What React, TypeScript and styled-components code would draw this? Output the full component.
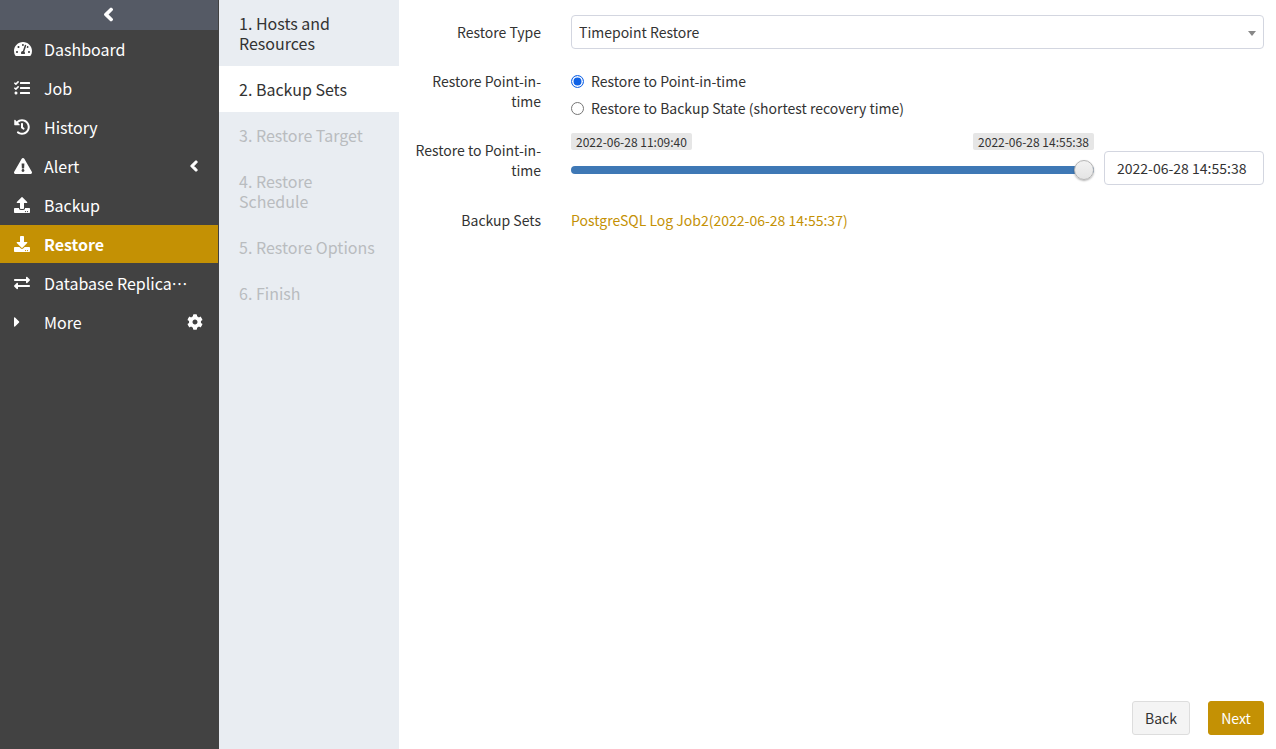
import React from "react";
import styled, { createGlobalStyle } from "styled-components";
import {
  FaCaretRight,
  FaChevronLeft,
  FaCog,
  FaDownload,
  FaExchangeAlt,
  FaExclamationTriangle,
  FaHistory,
  FaTachometerAlt,
  FaTasks,
  FaUpload,
} from "react-icons/fa";

const GlobalStyle = createGlobalStyle`
  html, body {
    margin: 0;
    padding: 0;
    height: 100%;
    overflow: hidden;
  }
  body {
    font-family: "Noto Sans CJK SC", "Noto Sans", sans-serif;
    font-size: 14px;
    color: #333;
    background: #fff;
  }
`;

const Page = styled.div`
  display: flex;
  width: 1276px;
  height: 749px;
`;

const Sidebar = styled.aside`
  width: 219px;
  flex-shrink: 0;
  background: #424242;
  color: #fff;
`;

const Collapse = styled.div`
  height: 30px;
  margin-right: 1px;
  display: flex;
  align-items: center;
  justify-content: center;
  background: #555a65;
  font-size: 15px;
  padding: 0 2px 1px 0;
  box-sizing: border-box;

  svg {
    stroke: currentColor;
    stroke-width: 40;
  }
`;

const NavItem = styled.div<{ $active?: boolean }>`
  height: 38px;
  margin: 0 1px 1px 0;
  box-sizing: border-box;
  display: flex;
  align-items: center;
  padding: 0 15px 1px 14px;
  font-size: 16px;
  font-weight: ${(p) => (p.$active ? 700 : 400)};
  background: ${(p) => (p.$active ? "#c49104" : "transparent")};
`;

const NavIcon = styled.span<{ $size?: number; $ml?: number }>`
  width: 30px;
  flex-shrink: 0;
  display: flex;
  align-items: center;
  font-size: ${(p) => p.$size ?? 16}px;
  margin-left: ${(p) => p.$ml ?? 0}px;
  margin-right: ${(p) => -(p.$ml ?? 0)}px;
`;

const NavLabel = styled.span`
  flex: 1;
  min-width: 0;
  max-width: 145px;
  white-space: nowrap;
  overflow: hidden;
  text-overflow: ellipsis;
`;

const NavTail = styled.span<{ $size: number; $mr: number; $bold?: boolean }>`
  display: flex;
  align-items: center;
  margin-left: auto;
  margin-right: ${(p) => p.$mr}px;
  font-size: ${(p) => p.$size}px;

  svg {
    stroke: currentColor;
    stroke-width: ${(p) => (p.$bold ? 50 : 0)};
  }
`;

const Steps = styled.nav`
  width: 180px;
  flex-shrink: 0;
  background: #e9edf2;
`;

const Step = styled.div<{ $state: "done" | "active" | "todo" }>`
  padding: 13px 20px;
  font-size: 16px;
  line-height: 20px;
  color: ${(p) => (p.$state === "todo" ? "#b9bcbf" : "#333")};
  background: ${(p) => (p.$state === "active" ? "#fff" : "transparent")};
`;

const Main = styled.main`
  flex: 1;
  display: flex;
  flex-direction: column;
  padding: 15px 12px 14px 0;
`;

const FormRow = styled.div<{ $mb: number }>`
  display: grid;
  grid-template-columns: 142px 1fr;
  column-gap: 30px;
  margin-bottom: ${(p) => p.$mb}px;
`;

const Label = styled.label<{ $pt: number }>`
  text-align: right;
  line-height: 20px;
  padding-left: 15px;
  padding-top: ${(p) => p.$pt}px;
`;

const Select = styled.div`
  position: relative;
  height: 34px;
  box-sizing: border-box;
  border: 1px solid #d3d6e0;
  border-radius: 4px;
  padding: 0 7px;
  line-height: 33px;

  &::after {
    content: "";
    position: absolute;
    right: 7px;
    top: 15px;
    border-left: 4px solid transparent;
    border-right: 4px solid transparent;
    border-top: 5px solid #888;
  }
`;

const RadioGroup = styled.div`
  display: flex;
  flex-direction: column;
  gap: 7px;
  padding-top: 3px;
`;

const RadioRow = styled.div`
  display: flex;
  align-items: center;
  gap: 7px;
  height: 20px;
`;

const RadioMark = styled.span<{ $on?: boolean }>`
  width: 13px;
  height: 13px;
  box-sizing: border-box;
  border-radius: 50%;
  border: ${(p) => (p.$on ? "1px solid #0f62e6" : "1px solid #767676")};
  background: #fff;
  box-shadow: ${(p) => (p.$on ? "inset 0 0 0 1.5px #fff, inset 0 0 0 6px #0f62e6" : "none")};
`;

const SliderRow = styled.div`
  display: flex;
  align-items: flex-start;
  gap: 10px;
`;

const Slider = styled.div`
  position: relative;
  flex: 1;
  height: 62px;
`;

const Track = styled.div`
  position: absolute;
  left: 0;
  right: 0;
  top: 33px;
  height: 8px;
  border-radius: 4px;
  background: #3e78b5;
`;

const Thumb = styled.div`
  position: absolute;
  right: 0;
  top: 27px;
  width: 20px;
  height: 20px;
  box-sizing: border-box;
  border-radius: 50%;
  border: 1px solid #b5b5b5;
  background: linear-gradient(#f2f2f2, #e4e4e4);
  box-shadow: 0 1px 2px rgba(0, 0, 0, 0.3);
`;

const SliderTip = styled.span<{ $side: "left" | "right" }>`
  position: absolute;
  top: 0;
  ${(p) => p.$side}: 0;
  height: 17px;
  padding: 0 5px;
  border-radius: 2px;
  background: #e6e6e6;
  font-size: 12px;
  line-height: 17px;
  white-space: nowrap;
`;

const TimeInput = styled.div`
  width: 160px;
  height: 34px;
  margin-top: 18px;
  box-sizing: border-box;
  border: 1px solid #d3d6e0;
  border-radius: 4px;
  padding-left: 12px;
  line-height: 33px;
`;

const SetLink = styled.a`
  line-height: 20px;
  padding-top: 3px;
  color: #c49104;
`;

const Footer = styled.div`
  margin-top: auto;
  display: flex;
  justify-content: flex-end;
  gap: 18px;
`;

const Button = styled.button<{ $primary?: boolean }>`
  height: 34px;
  width: ${(p) => (p.$primary ? 56 : 58)}px;
  padding: 0;
  border-radius: 3px;
  border: 1px solid ${(p) => (p.$primary ? "#c49104" : "#ddd")};
  background: ${(p) => (p.$primary ? "#c49104" : "#f4f4f4")};
  color: ${(p) => (p.$primary ? "#fff" : "#333")};
  font: inherit;
`;

const navItems = [
  { label: "Dashboard", icon: <FaTachometerAlt />, iconSize: 18 },
  { label: "Job", icon: <FaTasks /> },
  { label: "History", icon: <FaHistory /> },
  {
    label: "Alert",
    icon: <FaExclamationTriangle />,
    iconSize: 18,
    tail: <FaChevronLeft />,
    tailSize: 12,
    tailMr: 3,
    tailBold: true,
  },
  { label: "Backup", icon: <FaUpload /> },
  { label: "Restore", icon: <FaDownload />, active: true },
  { label: "Database Replication", icon: <FaExchangeAlt /> },
  { label: "More", icon: <FaCaretRight />, iconMl: -5, tail: <FaCog />, tailSize: 16, tailMr: 0 },
];

const steps: { label: string; state: "done" | "active" | "todo" }[] = [
  { label: "1. Hosts and Resources", state: "done" },
  { label: "2. Backup Sets", state: "active" },
  { label: "3. Restore Target", state: "todo" },
  { label: "4. Restore Schedule", state: "todo" },
  { label: "5. Restore Options", state: "todo" },
  { label: "6. Finish", state: "todo" },
];

const App = () => {
  return (
    <Page>
      <GlobalStyle />
      <Sidebar>
        <Collapse>
          <FaChevronLeft />
        </Collapse>
        {navItems.map((item) => (
          <NavItem key={item.label} $active={item.active}>
            <NavIcon $size={item.iconSize} $ml={item.iconMl}>
              {item.icon}
            </NavIcon>
            <NavLabel>{item.label}</NavLabel>
            {item.tail && (
              <NavTail $size={item.tailSize ?? 16} $mr={item.tailMr ?? 0} $bold={item.tailBold}>
                {item.tail}
              </NavTail>
            )}
          </NavItem>
        ))}
      </Sidebar>
      <Steps>
        {steps.map((step) => (
          <Step key={step.label} $state={step.state}>
            {step.label}
          </Step>
        ))}
      </Steps>
      <Main>
        <FormRow $mb={19}>
          <Label $pt={7}>Restore Type</Label>
          <Select>Timepoint Restore</Select>
        </FormRow>
        <FormRow $mb={15}>
          <Label $pt={3}>Restore Point-in-time</Label>
          <RadioGroup>
            <RadioRow>
              <RadioMark $on />
              Restore to Point-in-time
            </RadioRow>
            <RadioRow>
              <RadioMark />
              Restore to Backup State (shortest recovery time)
            </RadioRow>
          </RadioGroup>
        </FormRow>
        <FormRow $mb={12}>
          <Label $pt={7}>Restore to Point-in-time</Label>
          <SliderRow>
            <Slider>
              <SliderTip $side="left">2022-06-28 11:09:40</SliderTip>
              <SliderTip $side="right">2022-06-28 14:55:38</SliderTip>
              <Track />
              <Thumb />
            </Slider>
            <TimeInput>2022-06-28 14:55:38</TimeInput>
          </SliderRow>
        </FormRow>
        <FormRow $mb={0}>
          <Label $pt={3}>Backup Sets</Label>
          <SetLink>PostgreSQL Log Job2(2022-06-28 14:55:37)</SetLink>
        </FormRow>
        <Footer>
          <Button>Back</Button>
          <Button $primary>Next</Button>
        </Footer>
      </Main>
    </Page>
  );
};

export default App;
